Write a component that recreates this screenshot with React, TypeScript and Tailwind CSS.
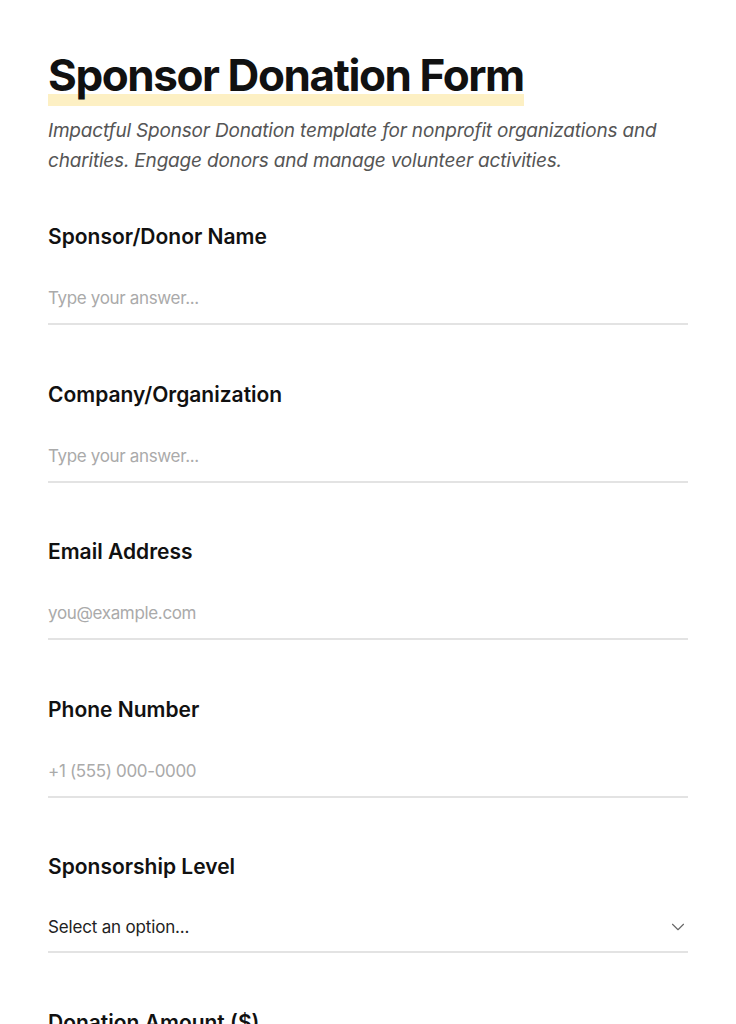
import { ChevronDown } from "lucide-react";

type Field = {
  label: string;
  placeholder?: string;
  type?: string;
  options?: string[];
};

const fields: Field[] = [
  { label: "Sponsor/Donor Name", placeholder: "Type your answer..." },
  { label: "Company/Organization", placeholder: "Type your answer..." },
  { label: "Email Address", placeholder: "you@example.com", type: "email" },
  { label: "Phone Number", placeholder: "+1 (555) 000-0000", type: "tel" },
  {
    label: "Sponsorship Level",
    options: ["Select an option...", "Platinum", "Gold", "Silver", "Bronze"],
  },
  { label: "Donation Amount ($)", placeholder: "0.00", type: "number" },
];

const font = "font-['Inter','Noto_Sans',sans-serif]";

export default function App() {
  return (
    <div className={`min-h-screen bg-white px-12 pt-[51px] text-[#111] ${font}`}>
      <h1 className="inline-block pb-[7px] text-[44px] leading-[48px] font-bold tracking-[-0.032em] shadow-[inset_0_-12px_0_#fdf0c4]">
        Sponsor Donation Form
      </h1>
      <p className="mt-[10px] text-[19px] leading-[30px] italic text-[#555] tracking-[-0.01em]">
        Impactful Sponsor Donation template for nonprofit organizations and
        charities. Engage donors and manage volunteer activities.
      </p>

      <form className="mt-[47px] flex flex-col">
        {fields.map((f) => (
          <div key={f.label} className="mb-[55.5px] flex flex-col">
            <label className="text-[21px] leading-[28px] font-semibold tracking-normal mb-6">
              {f.label}
            </label>
            {f.options ? (
              <div className="relative">
                <select
                  defaultValue={f.options[0]}
                  className={`block w-full h-[48px] appearance-none bg-transparent border-b-2 border-[#e3e3e3] p-0 text-[17px] text-[#222] outline-none tracking-[-0.01em] ${font}`}
                >
                  {f.options.map((o) => (
                    <option key={o}>{o}</option>
                  ))}
                </select>
                <ChevronDown
                  size={22}
                  strokeWidth={1.2}
                  className="pointer-events-none absolute right-[-1px] top-[11px] text-[#666]"
                />
              </div>
            ) : (
              <input
                type={f.type ?? "text"}
                placeholder={f.placeholder}
                className={`block w-full h-[50px] border-b-2 border-[#e3e3e3] pb-[2px] text-[17px] placeholder:text-[#aaa] outline-none tracking-[-0.02em] ${font}`}
              />
            )}
          </div>
        ))}
      </form>
    </div>
  );
}
